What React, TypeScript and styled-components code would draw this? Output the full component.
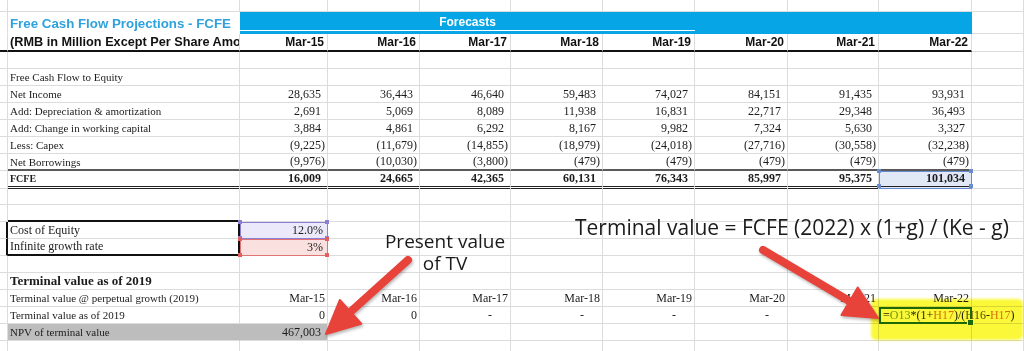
import React from "react";
import styled, { createGlobalStyle } from "styled-components";

const GRID = "#dcdcdc";
const COLS = "8px 232px 88px 92px 91px 92px 92px 93px 91px 93px 52px";
const SERIF = '"Liberation Serif", "Times New Roman", serif';
const SANS = '"Liberation Sans", Arial, sans-serif';
const BLUE = "#06a5e5";

const GlobalStyle = createGlobalStyle`
  html, body { margin: 0; padding: 0; background: #fff; }
  body { width: 1024px; height: 351px; overflow: hidden; }
`;

const Page = styled.div`
  position: relative;
  width: 1024px;
  height: 351px;
  overflow: hidden;
  background: #fff;
`;

const Sheet = styled.div`
  display: flex;
  flex-direction: column;
`;

const Row = styled.div<{ $h?: number }>`
  display: grid;
  grid-template-columns: ${COLS};
  height: ${(p) => p.$h ?? 17}px;
`;

type CellProps = {
  $bb?: string;
  $br?: string;
  $bg?: string;
  $span?: number;
};

const Cell = styled.div<CellProps>`
  position: relative;
  box-sizing: border-box;
  min-width: 0;
  display: flex;
  align-items: center;
  justify-content: flex-start;
  padding: 0 2px;
  border-right: ${(p) => p.$br ?? `1px solid ${GRID}`};
  border-bottom: ${(p) => p.$bb ?? `1px solid ${GRID}`};
  background: ${(p) => p.$bg ?? "transparent"};
  grid-column: ${(p) => (p.$span ? `span ${p.$span}` : "auto")};
  font-family: ${SERIF};
  font-size: 12px;
  color: #1c1c1c;
  white-space: nowrap;
  overflow: hidden;
`;

const Label = styled(Cell)<{ $size?: number; $bold?: boolean }>`
  font-size: ${(p) => p.$size ?? 11}px;
  font-weight: ${(p) => (p.$bold ? 700 : 400)};
  padding-left: 2px;
`;

const Num = styled(Cell)<{ $neg?: boolean; $bold?: boolean; $pr?: number }>`
  justify-content: flex-end;
  padding-right: ${(p) => p.$pr ?? (p.$neg ? 2 : 6)}px;
  font-weight: ${(p) => (p.$bold ? 700 : 400)};
`;

const TitleCell = styled(Cell)`
  font-family: ${SANS};
  font-weight: 700;
  font-size: 13.3px;
  color: #2ea2dc;
  padding-left: 2px;
  padding-top: 2px;
  border-bottom-color: transparent;
`;

const ForecastBand = styled(Cell)`
  justify-content: center;
  align-items: flex-start;
  padding-top: 3px;
  border: none;
  background: linear-gradient(
    to bottom,
    ${BLUE} 0,
    ${BLUE} 18px,
    #ffffff 18px,
    #ffffff 19px,
    ${BLUE} 19px
  );
  font-family: ${SANS};
  font-weight: 700;
  font-size: 12px;
  color: #fff;
`;

const BlueBand = styled(Cell)`
  border: none;
  background: ${BLUE};
`;

const HeadLabel = styled(Cell)`
  font-family: ${SANS};
  font-weight: 700;
  font-size: 12.7px;
  color: #111;
  padding-left: 2px;
`;

const HeadMonth = styled(Cell)`
  justify-content: flex-end;
  padding-right: 3px;
  font-family: ${SANS};
  font-weight: 700;
  font-size: 12px;
  color: #111;
`;

const InputCell = styled(Num)<{ $c: string; $fill: string }>`
  overflow: visible;
  background: ${(p) => p.$fill};
  outline: 1px solid ${(p) => p.$c};
  outline-offset: -1px;
  padding-right: 4px;
  z-index: 1;
`;

const SelectedCell = styled(Num)`
  overflow: visible;
  background: #e1e8f6;
  outline: 1px solid #6a8bcf;
  outline-offset: -1px;
  z-index: 1;
`;

const Handle = styled.span<{ $x: "l" | "r"; $y: "t" | "b"; $c: string }>`
  position: absolute;
  width: 4px;
  height: 4px;
  background: ${(p) => p.$c};
  ${(p) => (p.$x === "l" ? "left: -2px;" : "right: -2px;")}
  ${(p) => (p.$y === "t" ? "top: -2px;" : "bottom: -2px;")}
`;

const Handles: React.FC<{ c: string }> = ({ c }) => (
  <>
    <Handle $x="l" $y="t" $c={c} />
    <Handle $x="r" $y="t" $c={c} />
    <Handle $x="l" $y="b" $c={c} />
    <Handle $x="r" $y="b" $c={c} />
  </>
);

const FormulaCell = styled(Cell)`
  overflow: visible;
  outline: 2px solid #1f6b2c;
  outline-offset: -2px;
  padding-left: 4px;
  z-index: 2;
`;

const FillHandle = styled.span`
  position: absolute;
  right: -3px;
  bottom: -3px;
  width: 5px;
  height: 5px;
  background: #1f6b2c;
  border: 1px solid #fff;
`;

const Ref = styled.span<{ $c: string }>`
  color: ${(p) => p.$c};
`;

const Caret = styled.span`
  display: inline-block;
  width: 1px;
  height: 13px;
  margin-left: 2px;
  background: #000;
`;

const Highlight = styled.div`
  position: absolute;
  left: 873px;
  top: 301px;
  width: 148px;
  height: 37px;
  background: #fbf83a;
  border-radius: 3px;
  box-shadow: 0 0 3px 2px #fbf83a;
  mix-blend-mode: multiply;
  pointer-events: none;
  z-index: 5;
`;

const Overlay = styled.svg`
  position: absolute;
  left: 0;
  top: 0;
  pointer-events: none;
  z-index: 6;
  filter: drop-shadow(1px 2px 1.5px rgba(0, 0, 0, 0.28));
`;

const Note = styled.div`
  position: absolute;
  font-family: "Open Sans", "DejaVu Sans", sans-serif;
  color: #1b1b1b;
  white-space: nowrap;
  z-index: 7;
`;

const PvNote = styled(Note)`
  left: 375px;
  top: 230px;
  width: 140px;
  font-size: 19px;
  line-height: 22px;
  text-align: center;
`;

const FormulaNote = styled(Note)`
  left: 575px;
  top: 213px;
  font-size: 21px;
  line-height: 28px;
`;

const months = ["Mar-15", "Mar-16", "Mar-17", "Mar-18", "Mar-19", "Mar-20", "Mar-21", "Mar-22"];

const lines: [string, string[]][] = [
  ["Net Income", ["28,635", "36,443", "46,640", "59,483", "74,027", "84,151", "91,435", "93,931"]],
  ["Add: Depreciation & amortization", ["2,691", "5,069", "8,089", "11,938", "16,831", "22,717", "29,348", "36,493"]],
  ["Add: Change in working capital", ["3,884", "4,861", "6,292", "8,167", "9,982", "7,324", "5,630", "3,327"]],
  ["Less: Capex", ["(9,225)", "(11,679)", "(14,855)", "(18,979)", "(24,018)", "(27,716)", "(30,558)", "(32,238)"]],
  ["Net Borrowings", ["(9,976)", "(10,030)", "(3,800)", "(479)", "(479)", "(479)", "(479)", "(479)"]],
];

const fcfe = ["16,009", "24,665", "42,365", "60,131", "76,343", "85,997", "95,375"];

const BOX = "2px solid #111";

const BlankRow: React.FC<{ h?: number; bBottom?: string }> = ({ h, bBottom }) => (
  <Row $h={h}>
    <Cell />
    <Cell $bb={bBottom} />
    {Array.from({ length: 9 }).map((_, i) => (
      <Cell key={i} />
    ))}
  </Row>
);

type Pt = [number, number];

const arrowShape = (t: Pt, p: Pt) => {
  const dx = p[0] - t[0];
  const dy = p[1] - t[1];
  const len = Math.hypot(dx, dy);
  const ux = dx / len;
  const uy = dy / len;
  const nx = -uy;
  const ny = ux;
  const L = 33;
  const W = 16;
  const hx = p[0] - ux * L;
  const hy = p[1] - uy * L;
  const head = [
    [hx + nx * W, hy + ny * W],
    [p[0], p[1]],
    [hx - nx * W, hy - ny * W],
  ]
    .map((q) => q.join(","))
    .join(" ");
  return { shaft: { x1: t[0], y1: t[1], x2: hx + ux * 4, y2: hy + uy * 4 }, head };
};

const Arrow: React.FC<{ from: Pt; to: Pt }> = ({ from, to }) => {
  const a = arrowShape(from, to);
  return (
    <g>
      <line {...a.shaft} stroke="#e8433a" strokeWidth={8} strokeLinecap="round" />
      <polygon points={a.head} fill="#e8433a" strokeLinejoin="round" stroke="#e8433a" strokeWidth={2} />
    </g>
  );
};

export default function App() {
  return (
    <>
      <GlobalStyle />
      <Page>
        <Sheet>
          <BlankRow h={12} />

          <Row $h={22}>
            <Cell $bb="1px solid transparent" />
            <TitleCell $br="none">Free Cash Flow Projections - FCFE</TitleCell>
            <ForecastBand $span={5}>Forecasts</ForecastBand>
            <BlueBand $span={3} />
            <Cell />
          </Row>

          <Row $h={18}>
            <Cell $bb="2px solid #111" />
            <HeadLabel $bb="2px solid #111">(RMB in Million Except Per Share Amounts)</HeadLabel>
            {months.map((m) => (
              <HeadMonth key={m} $bb="2px solid #111">
                {m}
              </HeadMonth>
            ))}
            <Cell />
          </Row>

          <BlankRow />

          <Row>
            <Cell />
            <Label>Free Cash Flow to Equity</Label>
            {Array.from({ length: 9 }).map((_, i) => (
              <Cell key={i} />
            ))}
          </Row>

          {lines.map(([label, vals], li) => {
            const last = li === lines.length - 1;
            const bb = last ? "2px solid #5a5a5a" : undefined;
            return (
              <Row key={label}>
                <Cell />
                <Label $bb={bb}>{label}</Label>
                {vals.map((v, i) => (
                  <Num key={i} $neg={v.startsWith("(")} $bb={bb}>
                    {v}
                  </Num>
                ))}
                <Cell />
              </Row>
            );
          })}

          <Row>
            <Cell />
            <Label $bold $size={10} $bb="3px double #222">
              FCFE
            </Label>
            {fcfe.map((v) => (
              <Num key={v} $bold $bb="3px double #222">
                {v}
              </Num>
            ))}
            <SelectedCell $bold $bb="3px double #222">
              101,034
              <Handles c="#6a8bcf" />
            </SelectedCell>
            <Cell />
          </Row>

          <BlankRow />
          <BlankRow bBottom={BOX} />

          <Row>
            <Cell $br={BOX} />
            <Label $size={12} $br={BOX}>
              Cost of Equity
            </Label>
            <InputCell $c="#8c7fd2" $fill="#ebe9fa">
              12.0%
              <Handles c="#8c7fd2" />
            </InputCell>
            {Array.from({ length: 8 }).map((_, i) => (
              <Cell key={i} />
            ))}
          </Row>

          <Row>
            <Cell $br={BOX} />
            <Label $size={12} $br={BOX} $bb={BOX}>
              Infinite growth rate
            </Label>
            <InputCell $c="#e07474" $fill="#fbe0e0">
              3%
              <Handles c="#e06060" />
            </InputCell>
            {Array.from({ length: 8 }).map((_, i) => (
              <Cell key={i} />
            ))}
          </Row>

          <BlankRow />

          <Row>
            <Cell />
            <Label $bold $size={13}>
              Terminal value as of 2019
            </Label>
            {Array.from({ length: 9 }).map((_, i) => (
              <Cell key={i} />
            ))}
          </Row>

          <Row>
            <Cell />
            <Label>Terminal value @ perpetual growth (2019)</Label>
            {months.map((m) => (
              <Num key={m} $pr={2}>
                {m}
              </Num>
            ))}
            <Cell />
          </Row>

          <Row>
            <Cell />
            <Label>Terminal value as of 2019</Label>
            <Num $pr={2}>0</Num>
            <Num $pr={2}>0</Num>
            {Array.from({ length: 5 }).map((_, i) => (
              <Num key={i} $pr={18}>
                -
              </Num>
            ))}
            <FormulaCell>
              =<Ref $c="#6f9a1c">O13</Ref>*(1+<Ref $c="#d9742a">H17</Ref>)/(
              <Ref $c="#5a4a22">H16</Ref>-<Ref $c="#d9742a">H17</Ref>)
              <Caret />
              <FillHandle />
            </FormulaCell>
            <Cell />
          </Row>

          <Row>
            <Cell />
            <Label $bg="#bdbdbd" $br="1px solid #bdbdbd">
              NPV of terminal value
            </Label>
            <Num $bg="#bdbdbd">467,003</Num>
            {Array.from({ length: 8 }).map((_, i) => (
              <Cell key={i} />
            ))}
          </Row>

          <BlankRow />
        </Sheet>

        <Highlight />

        <Overlay width={1024} height={351} viewBox="0 0 1024 351">
          <Arrow from={[408, 260]} to={[326, 334]} />
          <Arrow from={[763, 250]} to={[878, 318]} />
        </Overlay>

        <PvNote>
          Present value
          <br />
          of TV
        </PvNote>
        <FormulaNote>Terminal value = FCFE (2022) x (1+g) / (Ke - g)</FormulaNote>
      </Page>
    </>
  );
}
